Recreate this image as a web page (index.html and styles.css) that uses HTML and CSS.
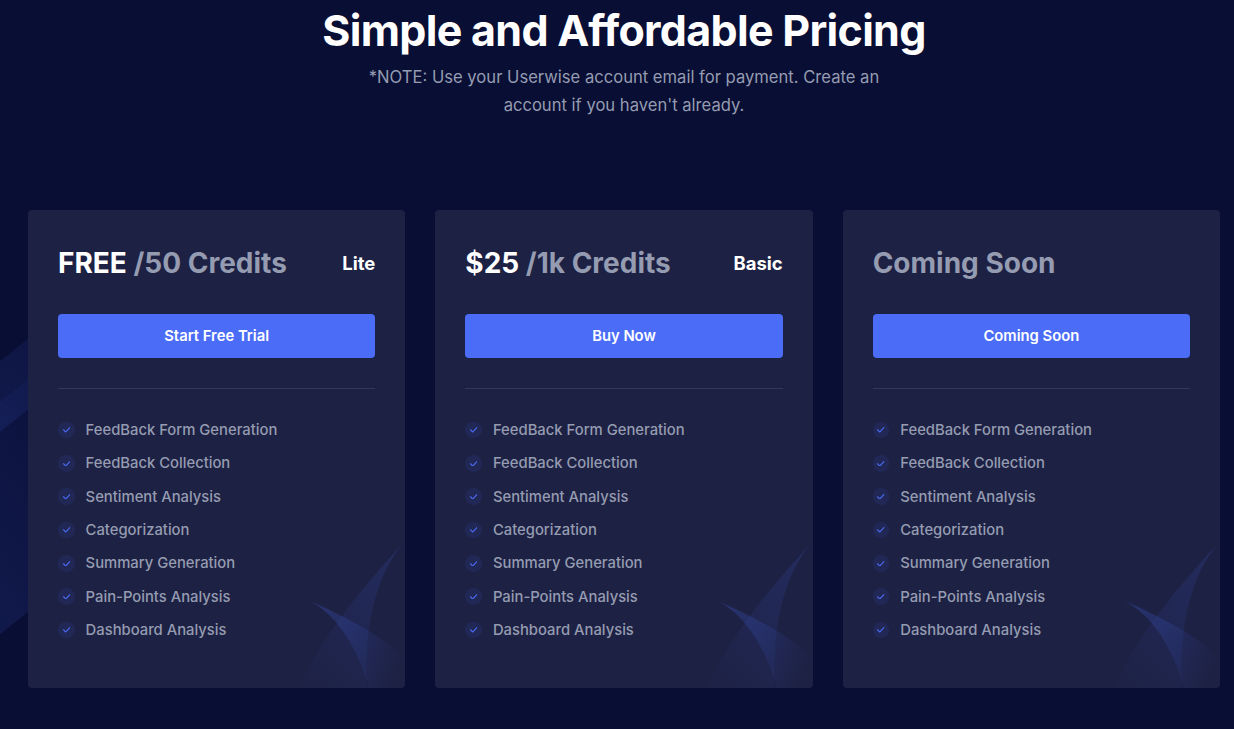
FILE: index.html
```html
<!DOCTYPE html>
<html lang="en">
<head>
<meta charset="utf-8">
<title>Pricing</title>
<link rel="stylesheet" href="styles.css">
</head>
<body>
<section class="pricing">
  <svg class="bg-decor" width="239" height="601" viewBox="0 0 239 601" fill="none" xmlns="http://www.w3.org/2000/svg">
    <rect opacity="0.3" x="-184.451" y="600.973" width="196" height="541.607" rx="2" transform="rotate(-128.7 -184.451 600.973)" fill="url(#bgA)"/>
    <rect opacity="0.3" x="-188.201" y="385.272" width="59.7544" height="541.607" rx="2" transform="rotate(-128.7 -188.201 385.272)" fill="url(#bgB)"/>
    <defs>
      <linearGradient id="bgA" x1="-90.1184" y1="420.414" x2="-90.1184" y2="1131.65" gradientUnits="userSpaceOnUse">
        <stop stop-color="#4A6CF7"/>
        <stop offset="1" stop-color="#4A6CF7" stop-opacity="0"/>
      </linearGradient>
      <linearGradient id="bgB" x1="-159.441" y1="204.509" x2="-159.441" y2="915.745" gradientUnits="userSpaceOnUse">
        <stop stop-color="#4A6CF7"/>
        <stop offset="1" stop-color="#4A6CF7" stop-opacity="0"/>
      </linearGradient>
    </defs>
  </svg>

  <div class="container">
    <header class="section-title">
      <h2>Simple and Affordable Pricing</h2>
      <p>*NOTE: Use your Userwise account email for payment. Create an account if you haven't already.</p>
    </header>

    <div class="cards">
      <div class="card">
        <div class="card-head">
          <h3 class="price"><span class="amount">FREE</span> <span class="time">/50 Credits</span></h3>
          <h4 class="package">Lite</h4>
        </div>
        <div class="card-action"><button class="btn">Start Free Trial</button></div>
        <ul class="features">
          <li><span class="check"><svg width="8" height="6" viewBox="0 0 8 6"><path d="M2.90567 6.00024C2.68031 6.00024 2.48715 5.92812 2.294 5.74764L0.169254 3.43784C-0.0560926 3.18523 -0.0560926 2.78827 0.169254 2.53566C0.39461 2.28298 0.74873 2.28298 0.974086 2.53566L2.90567 4.66497L7.02642 0.189715C7.25175 -0.062913 7.60585 -0.062913 7.83118 0.189715C8.0566 0.442354 8.0566 0.839355 7.83118 1.09198L3.54957 5.78402C3.32415 5.92812 3.09882 6.00024 2.90567 6.00024Z"/></svg></span>FeedBack Form Generation</li>
          <li><span class="check"><svg width="8" height="6" viewBox="0 0 8 6"><path d="M2.90567 6.00024C2.68031 6.00024 2.48715 5.92812 2.294 5.74764L0.169254 3.43784C-0.0560926 3.18523 -0.0560926 2.78827 0.169254 2.53566C0.39461 2.28298 0.74873 2.28298 0.974086 2.53566L2.90567 4.66497L7.02642 0.189715C7.25175 -0.062913 7.60585 -0.062913 7.83118 0.189715C8.0566 0.442354 8.0566 0.839355 7.83118 1.09198L3.54957 5.78402C3.32415 5.92812 3.09882 6.00024 2.90567 6.00024Z"/></svg></span>FeedBack Collection</li>
          <li><span class="check"><svg width="8" height="6" viewBox="0 0 8 6"><path d="M2.90567 6.00024C2.68031 6.00024 2.48715 5.92812 2.294 5.74764L0.169254 3.43784C-0.0560926 3.18523 -0.0560926 2.78827 0.169254 2.53566C0.39461 2.28298 0.74873 2.28298 0.974086 2.53566L2.90567 4.66497L7.02642 0.189715C7.25175 -0.062913 7.60585 -0.062913 7.83118 0.189715C8.0566 0.442354 8.0566 0.839355 7.83118 1.09198L3.54957 5.78402C3.32415 5.92812 3.09882 6.00024 2.90567 6.00024Z"/></svg></span>Sentiment Analysis</li>
          <li><span class="check"><svg width="8" height="6" viewBox="0 0 8 6"><path d="M2.90567 6.00024C2.68031 6.00024 2.48715 5.92812 2.294 5.74764L0.169254 3.43784C-0.0560926 3.18523 -0.0560926 2.78827 0.169254 2.53566C0.39461 2.28298 0.74873 2.28298 0.974086 2.53566L2.90567 4.66497L7.02642 0.189715C7.25175 -0.062913 7.60585 -0.062913 7.83118 0.189715C8.0566 0.442354 8.0566 0.839355 7.83118 1.09198L3.54957 5.78402C3.32415 5.92812 3.09882 6.00024 2.90567 6.00024Z"/></svg></span>Categorization</li>
          <li><span class="check"><svg width="8" height="6" viewBox="0 0 8 6"><path d="M2.90567 6.00024C2.68031 6.00024 2.48715 5.92812 2.294 5.74764L0.169254 3.43784C-0.0560926 3.18523 -0.0560926 2.78827 0.169254 2.53566C0.39461 2.28298 0.74873 2.28298 0.974086 2.53566L2.90567 4.66497L7.02642 0.189715C7.25175 -0.062913 7.60585 -0.062913 7.83118 0.189715C8.0566 0.442354 8.0566 0.839355 7.83118 1.09198L3.54957 5.78402C3.32415 5.92812 3.09882 6.00024 2.90567 6.00024Z"/></svg></span>Summary Generation</li>
          <li><span class="check"><svg width="8" height="6" viewBox="0 0 8 6"><path d="M2.90567 6.00024C2.68031 6.00024 2.48715 5.92812 2.294 5.74764L0.169254 3.43784C-0.0560926 3.18523 -0.0560926 2.78827 0.169254 2.53566C0.39461 2.28298 0.74873 2.28298 0.974086 2.53566L2.90567 4.66497L7.02642 0.189715C7.25175 -0.062913 7.60585 -0.062913 7.83118 0.189715C8.0566 0.442354 8.0566 0.839355 7.83118 1.09198L3.54957 5.78402C3.32415 5.92812 3.09882 6.00024 2.90567 6.00024Z"/></svg></span>Pain-Points Analysis</li>
          <li><span class="check"><svg width="8" height="6" viewBox="0 0 8 6"><path d="M2.90567 6.00024C2.68031 6.00024 2.48715 5.92812 2.294 5.74764L0.169254 3.43784C-0.0560926 3.18523 -0.0560926 2.78827 0.169254 2.53566C0.39461 2.28298 0.74873 2.28298 0.974086 2.53566L2.90567 4.66497L7.02642 0.189715C7.25175 -0.062913 7.60585 -0.062913 7.83118 0.189715C8.0566 0.442354 8.0566 0.839355 7.83118 1.09198L3.54957 5.78402C3.32415 5.92812 3.09882 6.00024 2.90567 6.00024Z"/></svg></span>Dashboard Analysis</li>
        </ul>
        <svg class="card-decor" width="166" height="146" viewBox="0 0 179 158" fill="none" xmlns="http://www.w3.org/2000/svg">
          <path opacity="0.5" d="M75.0002 63.256C115.229 82.3657 136.011 137.496 141.374 162.673C150.063 203.47 207.217 197.755 202.419 167.738C195.393 123.781 137.273 90.3579 75.0002 63.256Z" fill="url(#cdA)"/>
          <path opacity="0.3" d="M178.255 0.150879C129.388 56.5969 134.648 155.224 143.387 197.482C157.547 265.958 65.9705 295.709 53.1024 246.401C34.2588 174.197 100.939 83.7223 178.255 0.150879Z" fill="url(#cdB)"/>
          <defs>
            <linearGradient id="cdA" x1="69.6694" y1="29.9033" x2="196.108" y2="83.2919" gradientUnits="userSpaceOnUse">
              <stop stop-color="#4A6CF7" stop-opacity="0.62"/>
              <stop offset="1" stop-color="#4A6CF7" stop-opacity="0"/>
            </linearGradient>
            <linearGradient id="cdB" x1="165.348" y1="-75.4466" x2="-3.75136" y2="103.645" gradientUnits="userSpaceOnUse">
              <stop stop-color="#4A6CF7" stop-opacity="0.62"/>
              <stop offset="1" stop-color="#4A6CF7" stop-opacity="0"/>
            </linearGradient>
          </defs>
        </svg>
      </div>

      <div class="card">
        <div class="card-head">
          <h3 class="price"><span class="amount">$25</span> <span class="time">/1k Credits</span></h3>
          <h4 class="package">Basic</h4>
        </div>
        <div class="card-action"><button class="btn">Buy Now</button></div>
        <ul class="features">
          <li><span class="check"><svg width="8" height="6" viewBox="0 0 8 6"><path d="M2.90567 6.00024C2.68031 6.00024 2.48715 5.92812 2.294 5.74764L0.169254 3.43784C-0.0560926 3.18523 -0.0560926 2.78827 0.169254 2.53566C0.39461 2.28298 0.74873 2.28298 0.974086 2.53566L2.90567 4.66497L7.02642 0.189715C7.25175 -0.062913 7.60585 -0.062913 7.83118 0.189715C8.0566 0.442354 8.0566 0.839355 7.83118 1.09198L3.54957 5.78402C3.32415 5.92812 3.09882 6.00024 2.90567 6.00024Z"/></svg></span>FeedBack Form Generation</li>
          <li><span class="check"><svg width="8" height="6" viewBox="0 0 8 6"><path d="M2.90567 6.00024C2.68031 6.00024 2.48715 5.92812 2.294 5.74764L0.169254 3.43784C-0.0560926 3.18523 -0.0560926 2.78827 0.169254 2.53566C0.39461 2.28298 0.74873 2.28298 0.974086 2.53566L2.90567 4.66497L7.02642 0.189715C7.25175 -0.062913 7.60585 -0.062913 7.83118 0.189715C8.0566 0.442354 8.0566 0.839355 7.83118 1.09198L3.54957 5.78402C3.32415 5.92812 3.09882 6.00024 2.90567 6.00024Z"/></svg></span>FeedBack Collection</li>
          <li><span class="check"><svg width="8" height="6" viewBox="0 0 8 6"><path d="M2.90567 6.00024C2.68031 6.00024 2.48715 5.92812 2.294 5.74764L0.169254 3.43784C-0.0560926 3.18523 -0.0560926 2.78827 0.169254 2.53566C0.39461 2.28298 0.74873 2.28298 0.974086 2.53566L2.90567 4.66497L7.02642 0.189715C7.25175 -0.062913 7.60585 -0.062913 7.83118 0.189715C8.0566 0.442354 8.0566 0.839355 7.83118 1.09198L3.54957 5.78402C3.32415 5.92812 3.09882 6.00024 2.90567 6.00024Z"/></svg></span>Sentiment Analysis</li>
          <li><span class="check"><svg width="8" height="6" viewBox="0 0 8 6"><path d="M2.90567 6.00024C2.68031 6.00024 2.48715 5.92812 2.294 5.74764L0.169254 3.43784C-0.0560926 3.18523 -0.0560926 2.78827 0.169254 2.53566C0.39461 2.28298 0.74873 2.28298 0.974086 2.53566L2.90567 4.66497L7.02642 0.189715C7.25175 -0.062913 7.60585 -0.062913 7.83118 0.189715C8.0566 0.442354 8.0566 0.839355 7.83118 1.09198L3.54957 5.78402C3.32415 5.92812 3.09882 6.00024 2.90567 6.00024Z"/></svg></span>Categorization</li>
          <li><span class="check"><svg width="8" height="6" viewBox="0 0 8 6"><path d="M2.90567 6.00024C2.68031 6.00024 2.48715 5.92812 2.294 5.74764L0.169254 3.43784C-0.0560926 3.18523 -0.0560926 2.78827 0.169254 2.53566C0.39461 2.28298 0.74873 2.28298 0.974086 2.53566L2.90567 4.66497L7.02642 0.189715C7.25175 -0.062913 7.60585 -0.062913 7.83118 0.189715C8.0566 0.442354 8.0566 0.839355 7.83118 1.09198L3.54957 5.78402C3.32415 5.92812 3.09882 6.00024 2.90567 6.00024Z"/></svg></span>Summary Generation</li>
          <li><span class="check"><svg width="8" height="6" viewBox="0 0 8 6"><path d="M2.90567 6.00024C2.68031 6.00024 2.48715 5.92812 2.294 5.74764L0.169254 3.43784C-0.0560926 3.18523 -0.0560926 2.78827 0.169254 2.53566C0.39461 2.28298 0.74873 2.28298 0.974086 2.53566L2.90567 4.66497L7.02642 0.189715C7.25175 -0.062913 7.60585 -0.062913 7.83118 0.189715C8.0566 0.442354 8.0566 0.839355 7.83118 1.09198L3.54957 5.78402C3.32415 5.92812 3.09882 6.00024 2.90567 6.00024Z"/></svg></span>Pain-Points Analysis</li>
          <li><span class="check"><svg width="8" height="6" viewBox="0 0 8 6"><path d="M2.90567 6.00024C2.68031 6.00024 2.48715 5.92812 2.294 5.74764L0.169254 3.43784C-0.0560926 3.18523 -0.0560926 2.78827 0.169254 2.53566C0.39461 2.28298 0.74873 2.28298 0.974086 2.53566L2.90567 4.66497L7.02642 0.189715C7.25175 -0.062913 7.60585 -0.062913 7.83118 0.189715C8.0566 0.442354 8.0566 0.839355 7.83118 1.09198L3.54957 5.78402C3.32415 5.92812 3.09882 6.00024 2.90567 6.00024Z"/></svg></span>Dashboard Analysis</li>
        </ul>
        <svg class="card-decor" width="166" height="146" viewBox="0 0 179 158" fill="none" xmlns="http://www.w3.org/2000/svg">
          <path opacity="0.5" d="M75.0002 63.256C115.229 82.3657 136.011 137.496 141.374 162.673C150.063 203.47 207.217 197.755 202.419 167.738C195.393 123.781 137.273 90.3579 75.0002 63.256Z" fill="url(#cdA)"/>
          <path opacity="0.3" d="M178.255 0.150879C129.388 56.5969 134.648 155.224 143.387 197.482C157.547 265.958 65.9705 295.709 53.1024 246.401C34.2588 174.197 100.939 83.7223 178.255 0.150879Z" fill="url(#cdB)"/>
        </svg>
      </div>

      <div class="card">
        <div class="card-head">
          <h3 class="price"><span class="time">Coming Soon</span></h3>
        </div>
        <div class="card-action"><button class="btn">Coming Soon</button></div>
        <ul class="features">
          <li><span class="check"><svg width="8" height="6" viewBox="0 0 8 6"><path d="M2.90567 6.00024C2.68031 6.00024 2.48715 5.92812 2.294 5.74764L0.169254 3.43784C-0.0560926 3.18523 -0.0560926 2.78827 0.169254 2.53566C0.39461 2.28298 0.74873 2.28298 0.974086 2.53566L2.90567 4.66497L7.02642 0.189715C7.25175 -0.062913 7.60585 -0.062913 7.83118 0.189715C8.0566 0.442354 8.0566 0.839355 7.83118 1.09198L3.54957 5.78402C3.32415 5.92812 3.09882 6.00024 2.90567 6.00024Z"/></svg></span>FeedBack Form Generation</li>
          <li><span class="check"><svg width="8" height="6" viewBox="0 0 8 6"><path d="M2.90567 6.00024C2.68031 6.00024 2.48715 5.92812 2.294 5.74764L0.169254 3.43784C-0.0560926 3.18523 -0.0560926 2.78827 0.169254 2.53566C0.39461 2.28298 0.74873 2.28298 0.974086 2.53566L2.90567 4.66497L7.02642 0.189715C7.25175 -0.062913 7.60585 -0.062913 7.83118 0.189715C8.0566 0.442354 8.0566 0.839355 7.83118 1.09198L3.54957 5.78402C3.32415 5.92812 3.09882 6.00024 2.90567 6.00024Z"/></svg></span>FeedBack Collection</li>
          <li><span class="check"><svg width="8" height="6" viewBox="0 0 8 6"><path d="M2.90567 6.00024C2.68031 6.00024 2.48715 5.92812 2.294 5.74764L0.169254 3.43784C-0.0560926 3.18523 -0.0560926 2.78827 0.169254 2.53566C0.39461 2.28298 0.74873 2.28298 0.974086 2.53566L2.90567 4.66497L7.02642 0.189715C7.25175 -0.062913 7.60585 -0.062913 7.83118 0.189715C8.0566 0.442354 8.0566 0.839355 7.83118 1.09198L3.54957 5.78402C3.32415 5.92812 3.09882 6.00024 2.90567 6.00024Z"/></svg></span>Sentiment Analysis</li>
          <li><span class="check"><svg width="8" height="6" viewBox="0 0 8 6"><path d="M2.90567 6.00024C2.68031 6.00024 2.48715 5.92812 2.294 5.74764L0.169254 3.43784C-0.0560926 3.18523 -0.0560926 2.78827 0.169254 2.53566C0.39461 2.28298 0.74873 2.28298 0.974086 2.53566L2.90567 4.66497L7.02642 0.189715C7.25175 -0.062913 7.60585 -0.062913 7.83118 0.189715C8.0566 0.442354 8.0566 0.839355 7.83118 1.09198L3.54957 5.78402C3.32415 5.92812 3.09882 6.00024 2.90567 6.00024Z"/></svg></span>Categorization</li>
          <li><span class="check"><svg width="8" height="6" viewBox="0 0 8 6"><path d="M2.90567 6.00024C2.68031 6.00024 2.48715 5.92812 2.294 5.74764L0.169254 3.43784C-0.0560926 3.18523 -0.0560926 2.78827 0.169254 2.53566C0.39461 2.28298 0.74873 2.28298 0.974086 2.53566L2.90567 4.66497L7.02642 0.189715C7.25175 -0.062913 7.60585 -0.062913 7.83118 0.189715C8.0566 0.442354 8.0566 0.839355 7.83118 1.09198L3.54957 5.78402C3.32415 5.92812 3.09882 6.00024 2.90567 6.00024Z"/></svg></span>Summary Generation</li>
          <li><span class="check"><svg width="8" height="6" viewBox="0 0 8 6"><path d="M2.90567 6.00024C2.68031 6.00024 2.48715 5.92812 2.294 5.74764L0.169254 3.43784C-0.0560926 3.18523 -0.0560926 2.78827 0.169254 2.53566C0.39461 2.28298 0.74873 2.28298 0.974086 2.53566L2.90567 4.66497L7.02642 0.189715C7.25175 -0.062913 7.60585 -0.062913 7.83118 0.189715C8.0566 0.442354 8.0566 0.839355 7.83118 1.09198L3.54957 5.78402C3.32415 5.92812 3.09882 6.00024 2.90567 6.00024Z"/></svg></span>Pain-Points Analysis</li>
          <li><span class="check"><svg width="8" height="6" viewBox="0 0 8 6"><path d="M2.90567 6.00024C2.68031 6.00024 2.48715 5.92812 2.294 5.74764L0.169254 3.43784C-0.0560926 3.18523 -0.0560926 2.78827 0.169254 2.53566C0.39461 2.28298 0.74873 2.28298 0.974086 2.53566L2.90567 4.66497L7.02642 0.189715C7.25175 -0.062913 7.60585 -0.062913 7.83118 0.189715C8.0566 0.442354 8.0566 0.839355 7.83118 1.09198L3.54957 5.78402C3.32415 5.92812 3.09882 6.00024 2.90567 6.00024Z"/></svg></span>Dashboard Analysis</li>
        </ul>
        <svg class="card-decor" width="166" height="146" viewBox="0 0 179 158" fill="none" xmlns="http://www.w3.org/2000/svg">
          <path opacity="0.5" d="M75.0002 63.256C115.229 82.3657 136.011 137.496 141.374 162.673C150.063 203.47 207.217 197.755 202.419 167.738C195.393 123.781 137.273 90.3579 75.0002 63.256Z" fill="url(#cdA)"/>
          <path opacity="0.3" d="M178.255 0.150879C129.388 56.5969 134.648 155.224 143.387 197.482C157.547 265.958 65.9705 295.709 53.1024 246.401C34.2588 174.197 100.939 83.7223 178.255 0.150879Z" fill="url(#cdB)"/>
        </svg>
      </div>
    </div>
  </div>
</section>
</body>
</html>
```
FILE: styles.css
```css
* { box-sizing: border-box; }

html, body {
  margin: 0;
  padding: 0;
}

body {
  background: #090E34;
  font-family: Inter, "Noto Sans", "Liberation Sans", sans-serif;
  color: #959CB1;
  overflow: hidden;
}

.pricing {
  position: relative;
  height: 729px;
  overflow: hidden;
}

.bg-decor {
  position: absolute;
  left: 0;
  top: 215px;
  width: 221px;
  height: 556px;
  z-index: 0;
}

.container {
  position: relative;
  z-index: 1;
  width: 1192px;
  margin-left: 28px;
}

.section-title {
  text-align: center;
  margin: 0 auto;
  max-width: 560px;
  padding-top: 5px;
}

.section-title h2 {
  margin: 0 -100px 9px;
  color: #fff;
  font-size: 43px;
  letter-spacing: -0.7px;
  font-weight: 700;
  line-height: 50px;
  white-space: nowrap;
}

.section-title p {
  margin: 0;
  font-size: 16.6px;
  line-height: 27.5px;
  color: #959CB1;
}

.cards {
  display: grid;
  grid-template-columns: repeat(3, 1fr);
  column-gap: 30px;
  margin-top: 91px;
}

.card {
  position: relative;
  z-index: 1;
  background: #1D2144;
  border-radius: 4px;
  padding: 35px 30px 47px;
  overflow: hidden;
}

.card > *:not(.card-decor) {
  position: relative;
  z-index: 1;
}

.card-decor {
  position: absolute;
  right: 0;
  bottom: 0;
  z-index: 0;
}

.card-head {
  display: flex;
  align-items: center;
  justify-content: space-between;
  height: 36px;
  margin-bottom: 33px;
}

.price {
  margin: 0;
  font-size: 28px;
  font-weight: 700;
  line-height: 36px;
  color: #fff;
}

.price .time {
  color: #959CB1;
}

.package {
  margin: 0;
  font-size: 18.5px;
  font-weight: 700;
  color: #fff;
  line-height: 28px;
}

.card-action {
  padding-bottom: 30px;
  border-bottom: 1px solid rgba(255, 255, 255, 0.1);
  margin-bottom: 30px;
}

.btn {
  display: flex;
  width: 100%;
  height: 44px;
  align-items: center;
  justify-content: center;
  border: 0;
  border-radius: 4px;
  background: #4A6CF7;
  color: #fff;
  font-family: inherit;
  font-size: 14.8px;
  font-weight: 600;
  cursor: pointer;
}

.features {
  list-style: none;
  margin: 0;
  padding: 0;
  display: flex;
  flex-direction: column;
  gap: 11.33px;
}

.features li {
  display: flex;
  align-items: center;
  height: 22px;
  font-size: 14.8px;
  font-weight: 500;
  color: #959CB1;
}

.check {
  display: flex;
  align-items: center;
  justify-content: center;
  width: 16.6px;
  height: 16.6px;
  border-radius: 50%;
  background: rgba(74, 108, 247, 0.1);
  color: #4A6CF7;
  margin-right: 11px;
  flex: none;
}

.check svg {
  fill: currentColor;
  width: 7.4px;
  height: 5.5px;
}
```
